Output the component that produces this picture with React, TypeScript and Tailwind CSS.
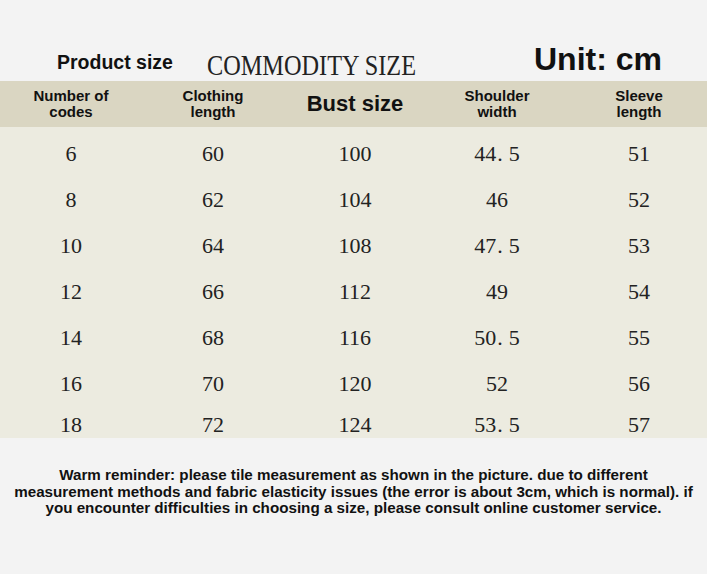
import React from "react";

const rows = [
  ["6", "60", "100", "44.5", "51"],
  ["8", "62", "104", "46", "52"],
  ["10", "64", "108", "47.5", "53"],
  ["12", "66", "112", "49", "54"],
  ["14", "68", "116", "50.5", "55"],
  ["16", "70", "120", "52", "56"],
  ["18", "72", "124", "53.5", "57"],
];

const sans = "font-['Liberation_Sans',Arial,sans-serif]";

function Num({ v }: { v: string }) {
  if (!v.includes(".")) return <span>{v}</span>;
  const [a, b] = v.split(".");
  return (
    <span>
      {a}
      <span className="ml-[1px] mr-[6px]">.</span>
      {b}
    </span>
  );
}

export default function App() {
  return (
    <div className="w-[707px] h-[574px] overflow-hidden bg-[#f3f3f3] text-[#111]">
      <div className="h-[81px] relative">
        <div className={`absolute left-[57px] top-[53px] text-[19.5px] font-bold leading-none ${sans}`}>Product size</div>
        <div className="absolute left-[207px] top-[50px] text-[30px] leading-none font-['Liberation_Serif',serif] origin-left scale-x-[0.81] whitespace-nowrap text-[#222]">
          COMMODITY SIZE
        </div>
        <div className={`absolute left-[534px] top-[43px] text-[32px] font-bold leading-none ${sans}`}>Unit: cm</div>
      </div>
      <div className={`h-[46px] bg-[#dad6c2] grid grid-cols-[repeat(5,142px)] items-center text-center font-bold ${sans}`}>
        <div className="text-[15px] leading-[16px]">Number of<br />codes</div>
        <div className="text-[15px] leading-[16px]">Clothing<br />length</div>
        <div className="text-[22px] leading-none">Bust size</div>
        <div className="text-[15px] leading-[16px]">Shoulder<br />width</div>
        <div className="text-[15px] leading-[16px]">Sleeve<br />length</div>
      </div>
      <div className="bg-[#ecebe0] pt-[3px] h-[311px] font-['Liberation_Serif',serif] text-[22px] text-[#222]">
        {rows.map((r, i) => (
          <div
            key={i}
            className={`grid grid-cols-[repeat(5,142px)] items-center text-center ${i === 6 ? "h-[36px]" : "h-[46px]"}`}
          >
            {r.map((c, j) => (
              <div key={j}><Num v={c} /></div>
            ))}
          </div>
        ))}
      </div>
      <div className={`mt-[29px] text-center text-[15.2px] leading-[16.5px] font-bold whitespace-nowrap ${sans}`}>
        Warm reminder: please tile measurement as shown in the picture. due to different<br />
        measurement methods and fabric elasticity issues (the error is about 3cm, which is normal). if<br />
        you encounter difficulties in choosing a size, please consult online customer service.
      </div>
    </div>
  );
}
